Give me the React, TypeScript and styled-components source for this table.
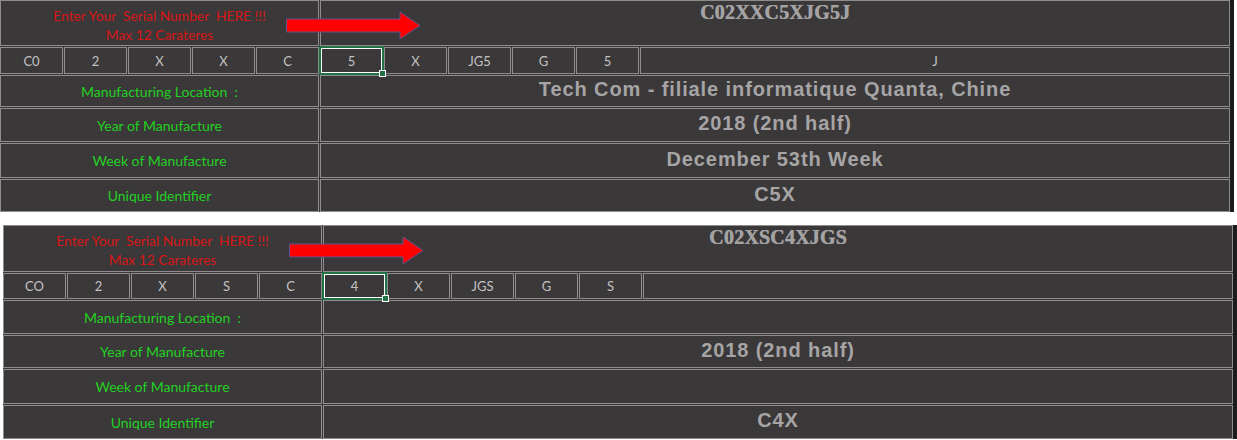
import { FC, Fragment } from "react";
import styled, { createGlobalStyle } from "styled-components";

interface ISerialSheet {
  serial: string;
  parts: string[];
  selected: number;
  location: string;
  year: string;
  week: string;
  identifier: string;
  offset: number;
  rows: string;
}

const sheets: ISerialSheet[] = [
  {
    serial: "C02XXC5XJG5J",
    parts: ["C0", "2", "X", "X", "C", "5", "X", "JG5", "G", "5", "J"],
    selected: 5,
    location: "Tech Com - filiale informatique Quanta, Chine",
    year: "2018 (2nd half)",
    week: "December 53th Week",
    identifier: "C5X",
    offset: 0,
    rows: "46px 27px 32px 34px 35px 33px",
  },
  {
    serial: "C02XSC4XJGS",
    parts: ["CO", "2", "X", "S", "C", "4", "X", "JGS", "G", "S", ""],
    selected: 5,
    location: "",
    year: "2018 (2nd half)",
    week: "",
    identifier: "C4X",
    offset: 3,
    rows: "47px 26px 34px 33px 35px 34px",
  },
];

const labels = [
  "Manufacturing Location  :",
  "Year of Manufacture",
  "Week of Manufacture",
  "Unique Identifier",
];

const Arrow: FC = () => (
  <StyledArrow width="136" height="30" viewBox="0 0 136 30">
    <path
      d="M0.5 8 H114 V1 L134 14.5 L114 28 V21 H0.5 Z"
      fill="#ff0000"
      stroke="#5e5590"
      strokeWidth="1"
    />
  </StyledArrow>
);

const Sheet: FC<{ sheet: ISerialSheet }> = ({ sheet }) => {
  const values = [sheet.location, sheet.year, sheet.week, sheet.identifier];
  return (
    <StyledPanel $offset={sheet.offset} $rows={sheet.rows}>
      <StyledNote>
        <span>Enter Your  Serial Number  HERE !!!</span>
        <span>Max 12 Carateres</span>
      </StyledNote>
      <StyledSerial>{sheet.serial}</StyledSerial>
      {sheet.parts.map((part, i) => (
        <StyledChar key={i} $selected={i === sheet.selected}>
          {part}
        </StyledChar>
      ))}
      {labels.map((label, i) => (
        <Fragment key={label}>
          <StyledLabel>{label}</StyledLabel>
          <StyledValue>{values[i]}</StyledValue>
        </Fragment>
      ))}
      <Arrow />
    </StyledPanel>
  );
};

const App: FC = () => {
  return (
    <>
      <GlobalStyle />
      <StyledPage>
        {sheets.map((sheet) => (
          <Sheet sheet={sheet} key={sheet.serial} />
        ))}
      </StyledPage>
    </>
  );
};

export default App;

const GlobalStyle = createGlobalStyle`
  html, body {
    margin: 0;
    padding: 0;
    background: #ffffff;
  }
  body {
    width: 1237px;
    height: 440px;
    overflow: hidden;
    font-family: Lato, "Open Sans", sans-serif;
  }
`;

const StyledPage = styled.div`
  display: flex;
  flex-direction: column;
  gap: 13px;
`;

const StyledPanel = styled.div<{ $offset: number; $rows: string }>`
  position: relative;
  display: grid;
  grid-template-columns: repeat(10, 63px) 1fr;
  grid-template-rows: ${(p) => p.$rows};
  gap: 1px;
  width: 1234px;
  margin-left: ${(p) => p.$offset}px;
  box-sizing: border-box;
  background-color: #3a3839;
  border-right: 4px solid #1d1c1c;
`;

const StyledCell = styled.div`
  box-sizing: border-box;
  border: 1px solid #8e8c8d;
  display: flex;
  align-items: center;
  justify-content: center;
  min-width: 0;
`;

const StyledNote = styled(StyledCell)`
  grid-column: span 5;
  flex-direction: column;
  padding-top: 3px;
  color: #d81616;
  font-size: 13.8px;
  line-height: 19px;
  white-space: pre;
`;

const StyledSerial = styled(StyledCell)`
  grid-column: span 6;
  align-items: flex-start;
  padding-top: 1px;
  color: #a4a2a3;
  font-family: "Liberation Serif", serif;
  font-weight: bold;
  font-size: 20px;
  line-height: 20px;
  letter-spacing: 0.2px;
  text-shadow: 0.5px 0 0 #a4a2a3;
`;

const StyledChar = styled(StyledCell)<{ $selected: boolean }>`
  position: relative;
  color: #c4c2c3;
  font-size: 13px;
  ${(p) =>
    p.$selected &&
    `
    z-index: 1;
    border: 2px solid #217346;
    box-shadow: inset 0 0 0 1px #ffffff;
    margin: -1px;
    &::after {
      content: "";
      position: absolute;
      right: -4px;
      bottom: -4px;
      width: 5px;
      height: 5px;
      background: #217346;
      border: 1px solid #ffffff;
    }
  `}
`;

const StyledLabel = styled(StyledCell)`
  grid-column: span 5;
  color: #22d022;
  font-size: 14px;
  white-space: pre;
`;

const StyledValue = styled(StyledCell)`
  grid-column: span 6;
  padding-bottom: 3px;
  color: #a6a4a5;
  font-family: "Liberation Sans", Arial, sans-serif;
  font-weight: bold;
  font-size: 20px;
  letter-spacing: 0.9px;
`;

const StyledArrow = styled.svg`
  position: absolute;
  left: 286px;
  top: 11px;
  z-index: 2;
`;
